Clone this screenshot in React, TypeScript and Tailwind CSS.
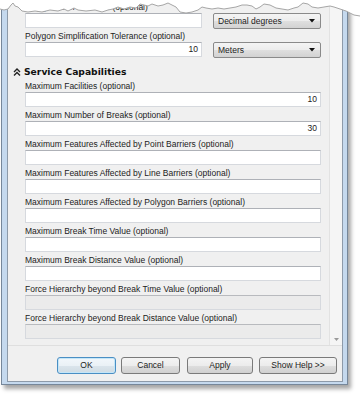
import React from 'react';

type Field = { label: string; value?: string; disabled?: boolean };

const fields: Field[] = [
  { label: 'Maximum Facilities (optional)', value: '10' },
  { label: 'Maximum Number of Breaks (optional)', value: '30' },
  { label: 'Maximum Features Affected by Point Barriers (optional)' },
  { label: 'Maximum Features Affected by Line Barriers (optional)' },
  { label: 'Maximum Features Affected by Polygon Barriers (optional)' },
  { label: 'Maximum Break Time Value (optional)' },
  { label: 'Maximum Break Distance Value (optional)' },
  { label: 'Force Hierarchy beyond Break Time Value (optional)', disabled: true },
  { label: 'Force Hierarchy beyond Break Distance Value (optional)', disabled: true },
];

const tear =
  '0,9 4,10 8,9 11,5 13,3 15,6 18,7 22,11 28,12 35,11 42,12 50,10 58,11 64,9 68,11 74,8 78,10 86,11 95,10 102,12 108,10 113,9 118,7 124,9 130,7 136,8 140,4 144,5 148,6 152,4 158,6 163,5 168,3 172,5 176,7 180,12 186,13 192,12 198,10 202,7 206,8 212,9 218,8 224,9 230,8 236,7 242,5 247,5 252,6 256,9 260,7 264,4 270,5 276,8 282,9 288,10 294,8 298,7 303,3 308,4 312,7 318,8 324,7 330,6 334,7 340,9 346,11 350,13 354,15 360,16';

const TextBox = ({ value, disabled, className = '' }: { value?: string; disabled?: boolean; className?: string }) => (
  <div
    className={`h-[15px] flex items-center justify-end pr-[3px] border border-[#d6d9de] border-t-[#aeb1b7] leading-none ${
      disabled ? 'bg-[#ebebeb] border-[#c9cbcf] border-t-[#b8babe]' : 'bg-white'
    } ${className}`}
  >
    {value}
  </div>
);

const Dropdown = ({ text }: { text: string }) => (
  <div className="w-[108px] h-[16px] flex items-center justify-between pl-[4px] pr-[5px] rounded-[2px] border border-[#8a8a8a] bg-[linear-gradient(to_bottom,#f4f4f4_0%,#ececec_50%,#dfdfdf_51%,#d2d2d2_100%)] leading-none">
    <span>{text}</span>
    <svg width="6" height="4" viewBox="0 0 6 4">
      <path d="M0 0h6L3 3.5z" fill="#111" />
    </svg>
  </div>
);

const Button = ({ children, width, primary }: { children: React.ReactNode; width: string; primary?: boolean }) => (
  <div
    className={`${width} h-[17px] flex items-center justify-center rounded-[3px] border leading-none ${
      primary
        ? 'border-[#4a8fc4] shadow-[inset_0_0_0_1px_#c4e6f8] bg-[linear-gradient(to_bottom,#f2f7fb_0%,#eaf1f6_50%,#dbe5ec_51%,#d0dbe3_100%)]'
        : 'border-[#7a7a7a] bg-[linear-gradient(to_bottom,#f4f4f4_0%,#ececec_50%,#dedede_51%,#d0d0d0_100%)]'
    }`}
  >
    {children}
  </div>
);

export default function App() {
  return (
    <div className="relative w-[360px] h-[399px] overflow-hidden bg-white font-['Liberation_Sans',Arial,sans-serif] text-[8.5px] text-[#1c1c1c]">
      {/* window frame */}
      <div className="ml-[1px] w-[347px] h-[385px] flex border-x border-b border-[#76879a] bg-[#c5d9ee] pl-[5px] pr-[4px] pb-[2px] shadow-[3px_4px_4px_rgba(0,0,0,0.35)]">
        <div className="flex-1 flex flex-col border-x border-b border-[#8d9aa9] bg-[#f0f0f0]">
          {/* scrolling parameter area */}
          <div className="h-[345px] flex">
            <div className="flex-1 flex flex-col">
              <div className="pl-[17px] pr-[8px] pt-[2px]">
                <div className="h-[11px] leading-[11px]">Polygon Trim Distance (optional)</div>
                <div className="flex gap-[11px]">
                  <TextBox className="w-[177px]" />
                  <Dropdown text="Decimal degrees" />
                </div>
                <div className="h-[11px] leading-[11px] mt-[2px]">Polygon Simplification Tolerance (optional)</div>
                <div className="flex gap-[11px]">
                  <TextBox className="w-[177px]" value="10" />
                  <Dropdown text="Meters" />
                </div>
              </div>

              <div className="mt-[6px] h-[15px] pl-[5px] flex items-center gap-[3px]">
                <svg width="8" height="8" viewBox="0 0 8 8">
                  <path d="M1 4 4 1 7 4M1 7.5 4 4.5 7 7.5" fill="none" stroke="#222" strokeWidth="1.4" />
                </svg>
                <span className="font-['DejaVu_Sans',Verdana,sans-serif] font-bold text-[9.2px] text-[#111]">
                  Service Capabilities
                </span>
              </div>

              <div className="pl-[17px] pr-[8px] mt-[2px] flex flex-col">
                {fields.map((f) => (
                  <div key={f.label} className="mb-[3px]">
                    <div className="h-[11px] leading-[11px] whitespace-nowrap">{f.label}</div>
                    <TextBox value={f.value} disabled={f.disabled} />
                  </div>
                ))}
              </div>
            </div>

            {/* scrollbar */}
            <div className="w-[13px] flex flex-col justify-end items-center border-l border-[#e2e2e2] bg-[#f5f5f5] pb-[4px]">
              <svg width="5" height="3" viewBox="0 0 5 3">
                <path d="M0 0h5L2.5 3z" fill="#9a9a9a" />
              </svg>
            </div>
          </div>

          {/* button bar */}
          <div className="flex-1 border-t border-[#dfdfdf] bg-[#f0f0f0] flex items-start pt-[11px] pl-[49px]">
            <Button width="w-[59px]" primary>OK</Button>
            <div className="ml-[5px]"><Button width="w-[59px]">Cancel</Button></div>
            <div className="ml-[7px]"><Button width="w-[66px]">Apply</Button></div>
            <div className="ml-[6px]"><Button width="w-[78px]">Show Help &gt;&gt;</Button></div>
          </div>
        </div>
      </div>

      {/* torn top edge */}
      <svg className="absolute top-0 left-0" width="360" height="20" viewBox="0 0 360 20">
        <polygon points={`0,0 ${tear} 360,0`} fill="#fff" />
        <polyline points={tear} fill="none" stroke="#a6a6a6" strokeWidth="1" />
      </svg>
    </div>
  );
}
